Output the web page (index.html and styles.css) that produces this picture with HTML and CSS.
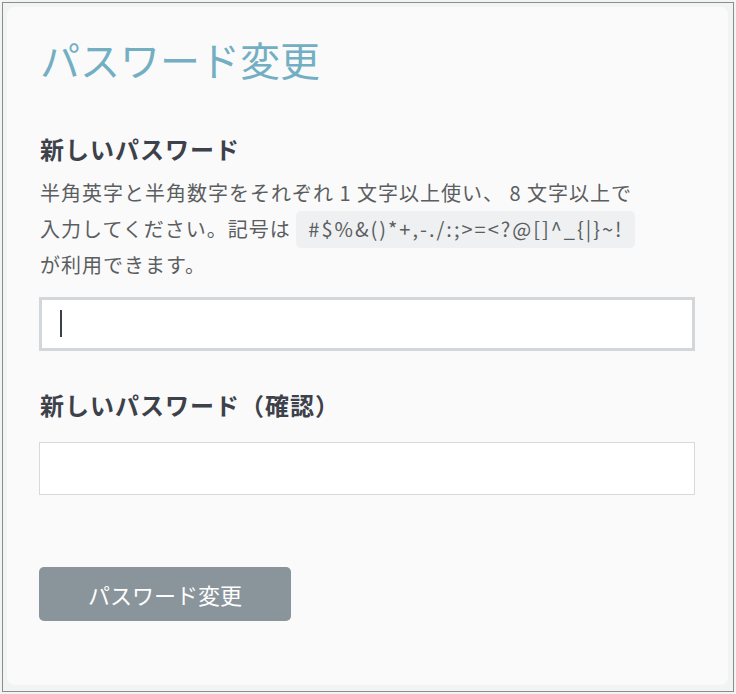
FILE: index.html
```html
<!DOCTYPE html>
<html lang="ja">
<head>
<meta charset="UTF-8" />
<meta name="viewport" content="width=device-width, initial-scale=1" />
<title>パスワード変更</title>
<link rel="stylesheet" href="styles.css">
</head>
<body>

<div class="frame">
  <form class="card" autocomplete="off">
    <h1>パスワード変更</h1>

    <label class="label" for="senha">新しいパスワード</label>
    <p class="hint">
      半角英字と半角数字をそれぞれ 1 文字以上使い、 8 文字以上で<br>
      入力してください。記号は <span class="chip">#$%&amp;()*+,-./:;&gt;=&lt;?@[]^_{|}~!</span><br>
      が利用できます。
    </p>
    <div class="field">
      <input type="password" id="senha" class="input focused" />
      <span class="caret"></span>
    </div>

    <label class="label second" for="confirma">新しいパスワード（確認）</label>
    <input type="password" id="confirma" class="input" />

    <button type="submit">パスワード変更</button>
  </form>
</div>

</body>
</html>
```

FILE: styles.css
```css
html {
  background-color: #f2f3f3;
}

body {
  margin: 0;
  font-family: "Noto Sans CJK JP", sans-serif;
}

.frame {
  margin: 2px;
  height: 690px;
  box-sizing: border-box;
  border: 1px solid #8b8d8d;
  background-color: #f2f3f3;
  padding: 4px 5px 6px 4px;
}

.card {
  height: 100%;
  box-sizing: border-box;
  background-color: #fafafa;
  border-radius: 8px;
  padding: 28px 33px 0 32px;
  display: flex;
  flex-direction: column;
  align-items: flex-start;
}

h1 {
  margin: 0 0 0 1px;
  font-size: 40px;
  line-height: 48px;
  font-weight: 400;
  color: #73afc3;
}

.label {
  margin: 48px 0 0 1px;
  font-size: 24px;
  line-height: 36px;
  font-weight: bold;
  letter-spacing: 1px;
  color: #3d414a;
}

.label.second {
  margin-top: 36px;
}

.hint {
  margin: 8px 0 0 1px;
  font-size: 20px;
  line-height: 36px;
  letter-spacing: 1px;
  color: #5b5e61;
}

.chip {
  background-color: #eef0f1;
  border-radius: 5px;
  padding: 3px 12px 5px;
  letter-spacing: 2px;
}

.field {
  position: relative;
  width: 100%;
  margin-top: 14px;
}

.input {
  display: block;
  width: 100%;
  height: 53px;
  box-sizing: border-box;
  border: 1px solid #d9d9d9;
  background-color: white;
  font-size: 20px;
  outline: none;
}

.label.second + .input {
  margin-top: 19px;
}

.input.focused {
  height: 54px;
  border: 3px solid #d3d7da;
}

.caret {
  position: absolute;
  left: 21px;
  top: 13px;
  width: 2px;
  height: 27px;
  background-color: #3b3f48;
}

button {
  margin-top: 72px;
  width: 252px;
  height: 54px;
  background-color: #8a949b;
  color: white;
  border: none;
  border-radius: 5px;
  font-family: inherit;
  font-size: 22px;
  cursor: pointer;
}
```
